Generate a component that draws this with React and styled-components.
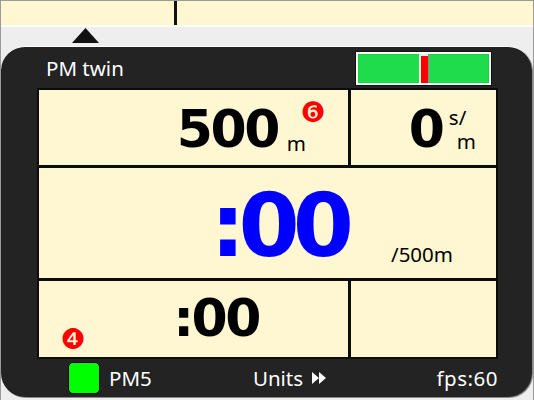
import React from 'react'
import styled, { createGlobalStyle } from 'styled-components'

const GlobalStyle = createGlobalStyle`
  html, body {
    margin: 0;
    padding: 0;
    background: #eeeeee;
  }
`

const Page = styled.div`
  box-sizing: border-box;
  width: 534px;
  height: 400px;
  overflow: hidden;
  display: flex;
  flex-direction: column;
  background: #eeeeee;
  border: 1px solid #9a9a9a;
  border-bottom: 0;
  font-family: "Noto Sans", "Open Sans", sans-serif;
`

const TopStrip = styled.div`
  display: flex;
  height: 24px;
  flex: none;
  background: #fef7d2;
  border-bottom: 2px solid #ffffff;
`

const TopCell = styled.div`
  width: ${(p) => p.$w || 'auto'};
  flex: ${(p) => (p.$w ? 'none' : '1')};
  border-right: ${(p) => (p.$w ? '3px solid #111' : '0')};
`

const ArrowRow = styled.div`
  display: flex;
  height: 19px;
  flex: none;
  padding: 1px 0 0 71px;
  box-sizing: border-box;
`

const Panel = styled.div`
  flex: none;
  width: 531px;
  height: 351px;
  box-sizing: border-box;
  padding: 0 34px 0 36px;
  display: flex;
  flex-direction: column;
  background: #232323;
  border-radius: 24px;
  border-top: 1px solid #ffffff;
  box-shadow: 1px 1px 0 #8a8a8a;
  color: #ffffff;
`

const Header = styled.div`
  height: 41px;
  flex: none;
  display: flex;
  align-items: center;
  justify-content: space-between;
  padding: 0 7px 0 9px;
  font-size: 20.5px;
`

const Meter = styled.div`
  box-sizing: border-box;
  width: 135px;
  height: 33px;
  margin-top: 1px;
  border: 2px solid #ffffff;
  background: #1fdc4c;
  outline: 1px solid #111;
  box-shadow: inset 0 0 0 1px #10d63f;
  display: flex;
  justify-content: center;
`

const MeterMark = styled.div`
  box-sizing: border-box;
  width: 9px;
  background: #ff0000;
  border: solid #e8e8e8;
  border-width: 2px 0 0 2px;
  box-shadow: 1px 0 0 #a08098;
`

const Grid = styled.div`
  flex: none;
  display: grid;
  grid-template-columns: 309px 145px;
  grid-template-rows: 75px 110px 76px;
  gap: 3px;
  background: #0c0c0c;
  border: 2px solid #0c0c0c;
  color: #000000;
`

const Cell = styled.div`
  position: relative;
  display: flex;
  align-items: flex-end;
  justify-content: ${(p) => p.$justify || 'flex-end'};
  grid-column: ${(p) => p.$span || 'auto'};
  padding: ${(p) => p.$pad || '0'};
  background: #fef7d2;
`

const Value = styled.span`
  font-family: "DejaVu Sans", sans-serif;
  font-weight: 700;
  font-size: ${(p) => p.$size || 52}px;
  letter-spacing: ${(p) => p.$spacing ?? -3}px;
  line-height: 1;
  color: ${(p) => p.$color || '#000000'};
`

const Unit = styled.span`
  margin-left: ${(p) => p.$gap || 0}px;
  margin-bottom: ${(p) => p.$lift || 0}px;
  font-size: 20.5px;
  line-height: 1;
`

const StackedUnit = styled.div`
  display: flex;
  flex-direction: column;
  align-items: flex-start;
  margin-bottom: ${(p) => p.$lift || 0}px;
  font-size: 20.5px;
  line-height: 24px;
`

const UnitLine = styled.span`
  margin-left: ${(p) => p.$indent || 0}px;
`

const Badge = styled.span`
  position: absolute;
  left: ${(p) => p.$left}px;
  top: ${(p) => p.$top}px;
  width: 26px;
  height: 26px;
  display: flex;
  align-items: center;
  justify-content: center;
  color: #ff0000;
  font-family: "DejaVu Sans", sans-serif;
  font-size: 28px;
  line-height: 1;
`

const Footer = styled.div`
  flex: 1;
  display: grid;
  grid-template-columns: 1fr auto 1fr;
  align-items: center;
  padding: 0 0 0 31px;
  font-size: 20.5px;
`

const Status = styled.div`
  display: flex;
  align-items: center;
  gap: 9px;
`

const Led = styled.span`
  box-sizing: border-box;
  width: 32px;
  height: 32px;
  background: #00ff00;
  border: 1px solid #000;
  border-radius: 5px;
`

const Units = styled.div`
  display: flex;
  align-items: center;
  gap: 9px;
  margin-left: 13px;
`

const Fps = styled.div`
  text-align: right;
  letter-spacing: 0.5px;
`

const FastForward = () => (
  <svg width="14" height="12" viewBox="0 0 14 12">
    <path d="M0 0 L7 6 L0 12 Z M7 0 L14 6 L7 12 Z" fill="#ffffff" />
  </svg>
)

const Arrow = () => (
  <svg width="27" height="15" viewBox="0 0 27 15">
    <path d="M13.5 0 L27 15 L0 15 Z" fill="#111111" />
  </svg>
)

export default function App() {
  return (
    <Page>
      <GlobalStyle />
      <TopStrip>
        <TopCell $w="173px" />
        <TopCell />
      </TopStrip>
      <ArrowRow>
        <Arrow />
      </ArrowRow>
      <Panel>
        <Header>
          <span>PM twin</span>
          <Meter>
            <MeterMark />
          </Meter>
        </Header>
        <Grid>
          <Cell $pad="0 42px 10px 0">
            <Value $spacing={-2.5}>500</Value>
            <Unit $gap={9} $lift={2}>m</Unit>
            <Badge $left={261} $top={10}>❻</Badge>
          </Cell>
          <Cell $pad="0 20px 10px 0">
            <Value>0</Value>
            <StackedUnit $lift={2}>
              <UnitLine $indent={7}>s/</UnitLine>
              <UnitLine $indent={15}>m</UnitLine>
            </StackedUnit>
          </Cell>
          <Cell $span="1 / -1" $pad="0 43px 8px 0">
            <Value $size={88} $color="#0000ff" $spacing={-7}>:00</Value>
            <Unit $gap={44} $lift={6}>/500m</Unit>
          </Cell>
          <Cell $pad="0 89px 13px 0">
            <Value $spacing={-2.5}>:00</Value>
            <Badge $left={21} $top={46}>❹</Badge>
          </Cell>
          <Cell />
        </Grid>
        <Footer>
          <Status>
            <Led />
            <span>PM5</span>
          </Status>
          <Units>
            <span>Units</span>
            <FastForward />
          </Units>
          <Fps>fps:60</Fps>
        </Footer>
      </Panel>
    </Page>
  )
}
